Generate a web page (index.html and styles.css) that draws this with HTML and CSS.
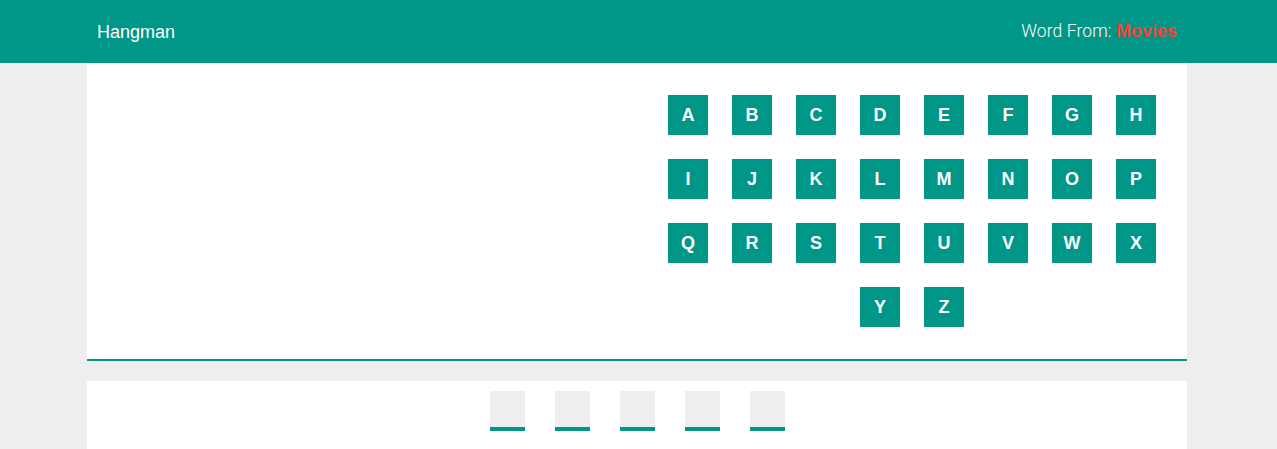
FILE: index.html
```html
<!DOCTYPE html>
<html>
<head>
<meta charset="utf-8">
<link rel="stylesheet" href="styles.css">
</head>
<body>
<header class="topbar">
  <div class="topbar-inner">
    <div class="brand">Hangman</div>
    <div class="category">Word From: <span class="category-name">Movies</span></div>
  </div>
</header>
<main class="container">
  <section class="board">
    <div class="gallows"></div>
    <div class="letters">
      <button class="key">A</button><button class="key">B</button><button class="key">C</button><button class="key">D</button>
      <button class="key">E</button><button class="key">F</button><button class="key">G</button><button class="key">H</button>
      <button class="key">I</button><button class="key">J</button><button class="key">K</button><button class="key">L</button>
      <button class="key">M</button><button class="key">N</button><button class="key">O</button><button class="key">P</button>
      <button class="key">Q</button><button class="key">R</button><button class="key">S</button><button class="key">T</button>
      <button class="key">U</button><button class="key">V</button><button class="key">W</button><button class="key">X</button>
      <button class="key">Y</button><button class="key">Z</button>
    </div>
  </section>
  <section class="word">
    <div class="slot"></div><div class="slot"></div><div class="slot"></div><div class="slot"></div><div class="slot"></div>
  </section>
</main>
</body>
</html>
```
FILE: styles.css
```css
html, body {
  margin: 0;
  padding: 0;
}
body {
  background: #eeeeee;
  font-family: "Liberation Sans", Arial, sans-serif;
  height: 449px;
  overflow: hidden;
  padding-right: 3px;
}
.topbar {
  background: #009688;
  height: 63px;
  margin-right: -3px;
  padding-right: 3px;
}
.topbar-inner {
  width: 1100px;
  margin: 0 auto;
  box-sizing: border-box;
  padding: 0 10px;
  height: 63px;
  display: flex;
  align-items: center;
  justify-content: space-between;
  color: #fff;
}
.brand {
  font-size: 18px;
  padding-top: 1px;
}
.category {
  font-family: Roboto, "Liberation Sans", sans-serif;
  font-weight: 300;
  font-size: 17.5px;
  letter-spacing: 0.1px;
}
.category-name {
  font-family: "Liberation Sans", Arial, sans-serif;
  font-weight: 700;
  font-size: 18px;
  letter-spacing: 0;
  color: #f44336;
}
.container {
  width: 1100px;
  margin: 0 auto;
}
.board {
  background: #fff;
  display: flex;
  padding: 20px 0;
  border-bottom: 2px solid #009688;
}
.gallows {
  width: 550px;
}
.letters {
  width: 550px;
  display: flex;
  flex-wrap: wrap;
  justify-content: center;
}
.key {
  width: 40px;
  height: 40px;
  margin: 12px;
  padding: 0;
  border: none;
  background: #009688;
  color: #fff;
  font-family: "Liberation Sans", Arial, sans-serif;
  font-weight: 700;
  font-size: 18px;
  line-height: 40px;
}
.word {
  margin-top: 20px;
  background: #fff;
  display: flex;
  justify-content: center;
  padding: 10px 0 30px;
}
.slot {
  width: 35px;
  height: 36px;
  margin: 0 15px;
  background: #eeeeee;
  border-bottom: 4px solid #009688;
}
```
